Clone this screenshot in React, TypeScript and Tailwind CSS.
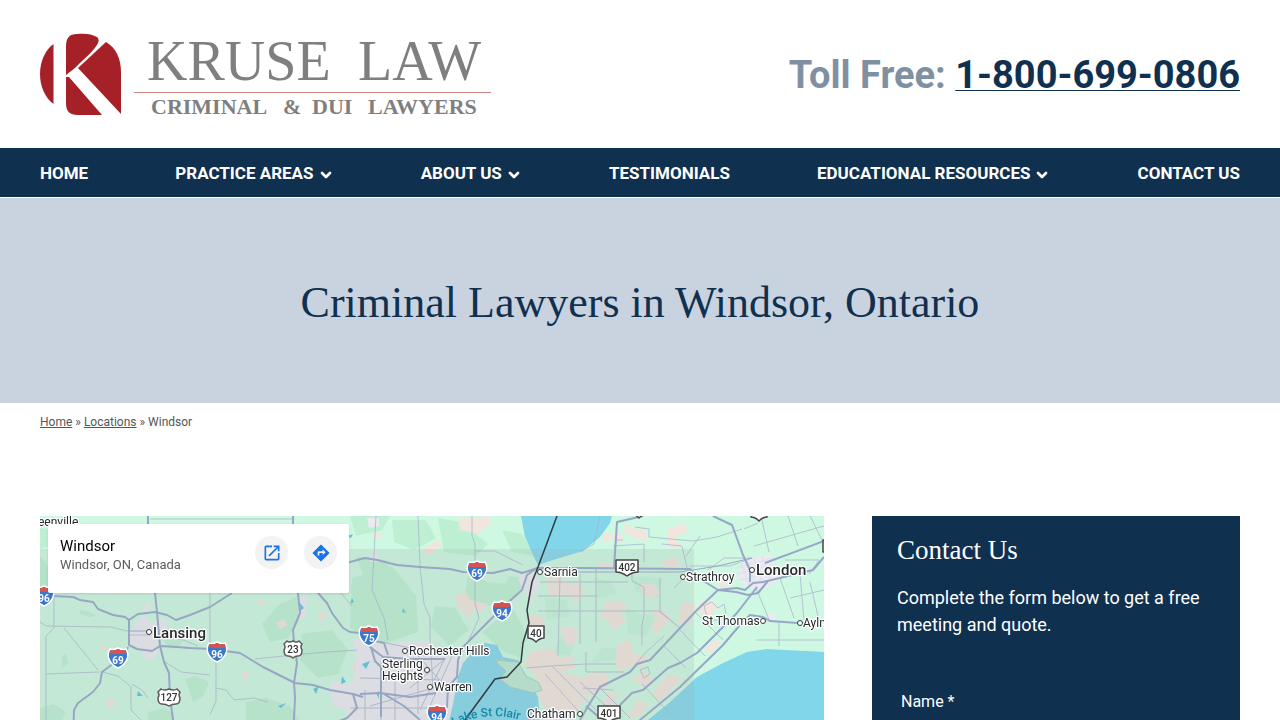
import { ChevronDown } from "lucide-react";

type NavItem = {
  label: string;
  hasMenu?: boolean;
};

const navItems: NavItem[] = [
  { label: "HOME" },
  { label: "PRACTICE AREAS", hasMenu: true },
  { label: "ABOUT US", hasMenu: true },
  { label: "TESTIMONIALS" },
  { label: "EDUCATIONAL RESOURCES", hasMenu: true },
  { label: "CONTACT US" },
];

const Logo = () => (
  <svg
    className="overflow-visible"
    width="452"
    height="84"
    viewBox="0 0 452 84"
    role="img"
    aria-label="Kruse Law"
  >
    <g fill="#a52127">
      <path d="M13.5 12C5 18 0 30 0 42s5 24 13.5 30Z" />
      <path d="M37 2c8-1 15 0 20 3 2 2 2 4 1 6-4 8-12 14-23 25l-9 7V15C26 6 29 2 37 2Z" />
      <path d="M66 10c10 6 15 16 15 31v41L38 36Z" />
      <path d="M29 45 62 83H38c-9 0-12-4-12-12V45Z" />
    </g>
    <path d="M94 60.500h357" stroke="#d08a86" />
    <g fill="#7f7f7f" className="font-['Liberation_Serif',serif]">
      <text x="107" y="48" fontSize="56">
        KRUSE
      </text>
      <text x="318" y="48" fontSize="56">
        LAW
      </text>
      <g fontSize="22" fontWeight="700">
        <text x="111" y="82">
          CRIMINAL
        </text>
        <text x="243" y="82">
          &amp;
        </text>
        <text x="272" y="82">
          DUI
        </text>
        <text x="328" y="82">
          LAWYERS
        </text>
      </g>
    </g>
  </svg>
);

const Header = () => (
  <header className="flex items-center justify-between px-10 py-8">
    <a href="#home">
      <Logo />
    </a>
    <p className="pt-0.5 text-[38px] leading-[48px] font-bold text-[#8090a3]">
      Toll Free:{" "}
      <a
        href="tel:1-800-699-0806"
        className="text-[#103050] underline decoration-1 underline-offset-2"
      >
        1-800-699-0806
      </a>
    </p>
  </header>
);

const Nav = () => (
  <nav className="flex h-[49px] items-center justify-between bg-[#103050] px-10 pt-0.5 text-[17px] font-bold text-white">
    {navItems.map((item) => (
      <a key={item.label} href="#" className="flex items-center gap-1">
        {item.label}
        {item.hasMenu && <ChevronDown className="mt-0.5 size-4" strokeWidth={4} />}
      </a>
    ))}
  </nav>
);

type ShieldProps = { x: number; y: number; n: string };

const Interstate = ({ x, y, n }: ShieldProps) => (
  <g transform={`translate(${x} ${y})`}>
    <path
      d="M-8-9q4 1.500 8-1 4 2.500 8 1 3 5 1 10-2 6-9 9-7-3-9-9-2-5 1-10Z"
      fill="#3b78c9"
      stroke="#fff"
      strokeWidth="1.500"
    />
    <path d="M-7.500-8q4 1 7.500-1 3.500 2 7.500 1l1 4H-8.500Z" fill="#d8534e" />
    <text y="6" textAnchor="middle" fontSize="10" fontWeight="700" fill="#fff">
      {n}
    </text>
  </g>
);

const UsRoute = ({ x, y, n }: ShieldProps) => {
  const w = n.length > 2 ? 10 : 8;
  const h = w / 2;
  return (
    <g transform={`translate(${x} ${y})`}>
      <path
        d={`M${2 - w} -8Q${-h} -6 0 -8Q${h} -6 ${w - 2} -8L${w + 1} -5Q${w - 1} -2 ${w + 1} 1Q${w + 1} 7 ${w - 3} 7Q${h - 2} 7 0 9Q${2 - h} 7 ${3 - w} 7Q${-w - 1} 7 ${-w - 1} 1Q${1 - w} -2 ${-w - 1} -5Z`}
        fill="#fff"
        stroke="#5b5b5b"
        strokeWidth="1.500"
      />
      <text y="4" textAnchor="middle" fontSize="10" fontWeight="500" fill="#333">
        {n}
      </text>
    </g>
  );
};

const OntarioRoute = ({ x, y, n }: ShieldProps) => {
  const w = n.length > 2 ? 11 : 8;
  const h = w / 2;
  return (
    <g transform={`translate(${x} ${y})`}>
      <path
        d={`M${-w} -7H${w}V5Q${h} 5 0 9Q${-h} 5 ${-w} 5Z`}
        fill="#fff"
        stroke="#444"
        strokeWidth="1.500"
        strokeLinejoin="round"
      />
      <text y="4" textAnchor="middle" fontSize="10" fontWeight="500" fill="#333">
        {n}
      </text>
    </g>
  );
};

type Town = {
  name: string;
  x: number;
  y: number;
  dot?: [number, number];
  size?: number;
  bold?: boolean;
};

const towns: Town[] = [
  { name: "eenville", x: -2, y: 10 },
  { name: "Lansing", x: 113, y: 122, dot: [109, 116], size: 15, bold: true },
  { name: "Rochester Hills", x: 369, y: 139, dot: [365, 135] },
  { name: "Sterling", x: 342, y: 152, dot: [387, 154] },
  { name: "Heights", x: 342, y: 164 },
  { name: "Warren", x: 394, y: 175, dot: [390, 171] },
  { name: "Sarnia", x: 504, y: 60, dot: [500, 56] },
  { name: "Chatham", x: 487, y: 202, dot: [540, 198] },
  { name: "Strathroy", x: 646, y: 65, dot: [643, 61] },
  { name: "London", x: 716, y: 59, dot: [712, 54], size: 15, bold: true },
  { name: "St Thomas", x: 662, y: 109, dot: [723, 105] },
  { name: "Aylmer", x: 763, y: 111, dot: [760, 107] },
];

const MapDrawing = () => (
  <svg
    className="absolute inset-0 h-full w-full font-['Roboto',sans-serif]"
    viewBox="0 0 784 450"
    preserveAspectRatio="xMinYMin slice"
    role="img"
    aria-label="Map of Windsor, Ontario"
  >
    <rect width="784" height="450" fill="#cff8e2" />

    {/* woodland */}
    <g fill="#b5eccd" opacity=".7">
      <path d="M0 12 18 16 10 30 0 33ZM310 0h40l-8 14-26 6ZM352 4l34 0 10 18-22 12-20-8ZM398 2l22 4 28 22-12 12-32-4ZM462 14l20 4 12 22-22-4Z" />
      <path d="M0 40l12 14-6 24-6 2ZM40 94l10 2 6 4-8 1-8-3ZM124 117l12-5 10 8-6 10-10 3-6-8ZM22 140l4-2 2 10-6 4ZM145 163l10-3 14 6-6 14-10 6-4-12ZM240 88l18-8 4 20-14 22-18 4-8-18ZM262 118l30-4 16 20-10 24-20 4-18-18ZM206 186l20-4 24 8 10 14h-54ZM108 196l16-4 10 6 0 6h-26ZM0 192l14-4 12 8-4 8H0Z" />
      <path d="M312 62l40-12 24 30 2 36-34 12-34-16ZM316 40l30 4 10 20-30 4ZM395 90l20 2 14 22-20 16-18-20ZM428 58l20 8 20 2-18 22-26-4ZM442 116l30-24 12 20-2 30-18-6ZM470 60l14 2-4 14-20 16-6-8Z" />
      <path d="M505 82l22 2 2 16-22 4ZM555 62l16 4 6 12-18 4ZM586 92l18 8 14-2-12 22-18-2ZM562 132l22 0-8 12-24 2ZM520 120l14 8-4 12-16-2ZM592 60l30 2-4 20-22-6Z" opacity=".6" />
    </g>
    {/* farmland and small settlements */}
    <g fill="#f2e5dd">
      <path d="M384 32l14-8 3 5-10 10-6-1ZM418 3l30-3 4 6-14 12-18-4ZM414 80l12-4 4 8 18 4-6 8-10-2-2 8-12-10ZM332 18l8-2 2 5-8 2ZM236 107l8-4 3 6-7 4ZM312 148l6-3 3 8-7 2ZM75 186l-6-4-4 6 6 5ZM278 98l6-3 3 7-7 4ZM219 82l6 2-2 5-5-1ZM204 155l6 2-4 6-5-3ZM62 128l4 2-2 5-3-2Z" />
      <path d="M498 28l14 8-2 8-14-2ZM506 63l12-2 10 6 14 0 2 12-8 6-10-6-16 2ZM490 100l12 0 4 16-12 8-6-8ZM566 86l14-2 8 8-8 4 6 10-14 8-4-10-8-2ZM600 68l14 0 6 10-10 4-8-4ZM562 16l12 4 6-5 4 12-12-4-8 4ZM583 8l14 6 8 0 2 12-12-4-10-6ZM628 13l16-6 4 8-14 6 8 10-14 0ZM560 46l20 3-4 4-18-2ZM620 46l14-6 6 10-12 2Z" />
      <path d="M490 136l22-4 8 10 12-2 4 12-14 4 22 6 10-6 14 2-2 16-18 6-14 20-20 4-14-18-4-26-12-12ZM577 129l12-6 4 14 16 4-8 10-10-2-12 8-4-12ZM613 94l10 0 8 8-14 16-6-6 4-10ZM642 85l14 4-6 20-12-2ZM520 112l12-2 6 6-2 12-10 2Z" />
      <path d="M604 154l10 10-8 8-14-8ZM628 158l14 4-22 24-8-8ZM660 86l10-2 8 8-8 8-10-2ZM674 124l8 2-12 12-6-4ZM598 184l10 4-8 12-14 2ZM568 176l10 2-4 12-12 2ZM680 62l8 2-4 8-8-4Z" />
    </g>

    {/* built-up areas */}
    <g fill="#eceaf1">
      <path d="M313 124l14-3 14 6 50-2 12 14 36 4-16 22-9 24-8 18H302l6-12-16-6-2-22 12-2 8 4 6-14 0-14Z" />
      <path d="M98 104l7-4 6 8 10-6 6 4 0 10-10 4 2 14-6 10-8-2-6-12-8 2-2-12ZM704 44l24-6 14 24-16 10-14 2-16-12ZM478 62l14-10 8 16-9 18-9-14ZM258 82l9-2-2 22-7 2ZM102 90l6-3 3 6-8 3Z" />
      <path d="M327 2l12 0 0 8-10 2ZM330 38l8 0 0 8-8 0ZM384 186l12-4 8 16-20 6ZM728 97l8 0 0 8-8 0Z" />
    </g>

    {/* lakes */}
    <g fill="#82d6ea">
      <path d="M481 0l4 21 8 18 5 10 15-5 30-9 17-14 10-14 2-7Z" />
      <path d="M445 127l12 2 6 12 14 3 4 2-14 15 3 10 23 1 5 9 2 23-10 46h-90l6-30 7-32 5-27 5-14 8-9Z" />
      <path d="M600 209l8-5 22-18 27-25 26-14 24-11 20-3 57 3v314H540l12-190Z" />
    </g>
    <g fill="#58c5e0">
      <path d="M260 87l4 5-4 3ZM302 160l4 6-5 2ZM8 22l6 3-6 2ZM322 148l8-3-4 8ZM336 177l3-2 0 8ZM98 175l5 5-6 0ZM238 190l8-3-5 5ZM273 173l6-3-3 8ZM363 92l3 5-4-1ZM307 20l6-2-2 4ZM312 82l2 4-4 2Z" />
    </g>
    <path
      d="M456 144l22 2 8 14 12 6 4 8-8 3-24-6-10-8 6-8-8-7Z"
      fill="#bce8d2"
      stroke="#a9cbbc"
    />

    {/* minor roads */}
    <g fill="none" stroke="#a9b2ce" strokeWidth="1" opacity=".75">
      <path d="M0 106l6 4 65 1 16 4 21 0M6 158v46M12 31v6M6 158l54-2M14 80l0 32-8 8 0 38M24 112l34 42M62 156l16 4 12 10M90 119h20M90 115h18M110 3h144M170 77l0 54M176 139l0 46-6 14M91 170l0 24 10 10M92 168l10 6 6 8M125 146l16 10 29 3M176 172l10 2 8 10 20-2 14 4M215 143l38-4 34-3 30-2M128 118l30 12" />
      <path d="M336 0l-2 38-2 36 12 28 4 22M378 0l2 50 4 38 6 14 0 20 3 50M432 0l0 20 3 8 0 60 4 14-10 22M300 76l12 14M435 35h20l28 14" />
      <path d="M498 95h122l16 14M500 66h88M540 58l0 70M520 60l-2 80M556 52l0 74M592 53l0 12 12 6v28l-2 10v20M498 80h60M510 150l36-2 30 0M486 152l24-2M543 172l30 2M546 136v20h38" />
      <path d="M573 30l31-2 0 18M595 11l14 2 0 8 44 4 24-4 25-8M577 24l6 0M622 28l20 2 6 26M650 50l40 0 22-8M560 0l-6 28-14 8M704 13l14-6M721 0l8 36M748 0l10 30M770 0l14 28M714 30l70-20M716 72l14 34M740 62l14 40M760 58l4 46M750 82l34-8M716 124h68M739 106l0 24M770 66l8 34" />
      <path d="M590 156l14-18 20-18M624 130l22 22M640 114l25 26M655 96l28 28M620 62v34l20 16M634 72l16-16M668 54l16-12 28 0M745 44l34 0-10 14M660 20l-14 20M602 168l28 30" />
      <path d="M505 158l36 40M512 150l44 44M540 166l26 24M560 172l30 30" />
      <path d="M664 90l8-4 6 6 6-4 2 10-8 6-10 0ZM600 154l8-3 2 7-6 4Z" />
    </g>
    <g fill="none" stroke="#b3b9cf" strokeWidth="1">
      <path d="M341 126l30 6 34 38M320 162l80 2M325 174v30M341 146v58M310 192h90M355 166v38M370 172l36-30M378 148v50M330 190l70-20M404 144l-24 50M412 140l-22 50" />
    </g>
    <g fill="none" stroke="#dfe2ef" strokeWidth="1.500">
      <path d="M696 52l38-10M697 58l40-10M699 64l40-8M700 44l10 28M706 42l10 28M713 40l10 28M722 40l8 24" />
    </g>

    {/* highways */}
    <g fill="none" stroke="#97a5c8" strokeWidth="2" strokeLinejoin="round">
      <path d="M108 0v8M115 77l2 19 3 34 4 16 5 11 1 24 3 23v30" />
      <path d="M-2 80h15l20 1 7 3 13 2 5 7 15 6 12 2 4 3v25l8 4 15 2 8-5 17 1 13 1 20 1 30 4 23 14 20 10 12 6 18 2 17 5 23 4 10 3" />
      <path d="M89 104l9-6 17-2 12 3 9 5 14-5 20-8 22-14M88 131l-3 6-7 7-16 12-2 11-7 9-15 11-4 7-1 30" />
      <path d="M253 0v8M258 77l2 20-7 17 1 13 3 20-3 20 1 14-2 43M278 77l9 10 5 10 11 15 7 4 10 1 10 14 13 10 26 2 36 0" />
      <path d="M286 60l14-10 10-4 15-4 12 2 20 5 23 2 30 2 13 3 30 1 17-4 12 4 16-5" />
      <path d="M498 51l-11 8-5 15-9 8-20 19-30 30-5 13-1 17-9 10-1 20-17 13-10 30" />
      <path d="M313 178l4 14-10 10-10 4M320 117l6 6 18 4 4 12M331 131l4 14 6 6 0 50M320 178l20-1 30 4 26-4M344 178l20 12 16 14" />
      <path d="M498 52h42l110 1 7 8 21 13 19-2 8 2 8-7 10-1 50-12 11-13" />
      <path d="M498 56h142l38-6 34-8" strokeWidth="1" />
      <path d="M540 204l7-12 13-21 30-15 7-8 13-4 47-50 21-20 18 2 12 3 10-2 10-12M546 190l14 12" />
      <path d="M580 189l12-12 11-3 25-22 12-5 17-10 40-40 10-13 10-13" />
      <path d="M590 212l10-8 40-33 43-42 17-20 10-10 13 2 7 4 28 2h26" />
      <path d="M673 0l19 9 11 30 7 15 0 12M603 0l-26 6-3 46M725 47l59-22" />
    </g>

    <rect y="33" width="654" height="417" fill="#9aa" opacity=".2" />
    <path
      d="M517 0l-19 51-6 15-5 28 2 13-6 20-2 19-14 15-12 2-30 41-30 46"
      fill="none"
      stroke="#333a40"
      strokeWidth="1.500"
    />

    <path id="lake-label" d="M414 210Q452 190 496 210" fill="none" />
    <text fontSize="12" fontWeight="500" fill="#168aa5">
      <textPath href="#lake-label">Lake St Clair</textPath>
    </text>

    {towns.map((t) => (
      <g key={t.name}>
        {t.dot && (
          <circle cx={t.dot[0]} cy={t.dot[1]} r="2.500" fill="#fff" stroke="#333" />
        )}
        <text
          x={t.x}
          y={t.y}
          fontSize={t.size ?? 12}
          fontWeight={t.bold ? 500 : 400}
          fill="#26282b"
          stroke="#fff"
          strokeWidth="2.500"
          strokeLinejoin="round"
          paintOrder="stroke"
        >
          {t.name}
        </text>
      </g>
    ))}

    <Interstate x={4} y={80} n="96" />
    <Interstate x={78} y={142} n="69" />
    <Interstate x={177} y={136} n="96" />
    <Interstate x={329} y={120} n="75" />
    <Interstate x={437} y={55} n="69" />
    <Interstate x={462} y={95} n="94" />
    <Interstate x={397} y={199} n="94" />
    <UsRoute x={253} y={133} n="23" />
    <UsRoute x={129} y={181} n="127" />
    <OntarioRoute x={496} y={117} n="40" />
    <OntarioRoute x={587} y={51} n="402" />
    <OntarioRoute x={569} y={197} n="401" />
    <OntarioRoute x={599} y={-7} n="21" />
    <OntarioRoute x={719} y={-4} n="7" />
    <OntarioRoute x={791} y={31} n="19" />
  </svg>
);

const OpenIcon = () => (
  <svg className="size-5" viewBox="0 0 24 24" fill="#1a73e8" aria-hidden="true">
    <path d="M19 19H5V5h7V3H5a2 2 0 0 0-2 2v14a2 2 0 0 0 2 2h14a2 2 0 0 0 2-2v-7h-2ZM14 3v2h3.590l-9.830 9.830 1.410 1.410L19 6.410V10h2V3Z" />
  </svg>
);

const DirectionsIcon = () => (
  <svg className="size-5" viewBox="0 0 24 24" fill="#1a73e8" aria-hidden="true">
    <path d="m21.710 11.290-9-9a1 1 0 0 0-1.410 0l-9 9a1 1 0 0 0 0 1.410l9 9a1 1 0 0 0 1.410 0l9-9a1 1 0 0 0 0-1.410ZM14 14.500V12h-4v3H8v-4a1 1 0 0 1 1-1h5V7.500l3.500 3.500Z" />
  </svg>
);

const LocationMap = () => (
  <section className="relative h-[450px] overflow-hidden">
    <MapDrawing />
    <div className="absolute top-2 left-2 flex h-[69px] w-[301px] gap-4 rounded-xs bg-white p-3 shadow">
      <div className="flex-1">
        <h2 className="text-[15px] leading-5 text-black">Windsor</h2>
        <p className="text-[13px] leading-[18px] text-[#5b5b5b]">Windsor, ON, Canada</p>
      </div>
      <button
        type="button"
        aria-label="Open in maps"
        className="flex size-[33px] items-center justify-center rounded-full bg-[#f3f3f3]"
      >
        <OpenIcon />
      </button>
      <button
        type="button"
        aria-label="Directions"
        className="flex size-[33px] items-center justify-center rounded-full bg-[#f3f3f3]"
      >
        <DirectionsIcon />
      </button>
    </div>
  </section>
);

const ContactForm = () => (
  <aside className="bg-[#103050] px-[25px] pt-4 pb-8 text-white">
    <h2 className="font-['Liberation_Serif',serif] text-[27px] leading-9">Contact Us</h2>
    <p className="mt-4 text-lg leading-[27px]">
      Complete the form below to get a free meeting and quote.
    </p>
    <form className="mt-[52px] flex flex-col gap-2 px-1">
      <label htmlFor="name" className="text-base leading-6">
        Name *
      </label>
      <input
        id="name"
        type="text"
        required
        className="h-10 w-full bg-white px-3 text-[#103050]"
      />
    </form>
  </aside>
);

const App = () => {
  return (
    <div className="bg-white font-['Roboto',sans-serif]">
      <Header />
      <Nav />
      <div className="mt-px flex h-[205px] items-center justify-center bg-[#c9d3df] px-10 pt-1">
        <h1 className="font-['Liberation_Serif',serif] text-[44px] leading-[54px] text-[#103050]">
          Criminal Lawyers in Windsor, Ontario
        </h1>
      </div>
      <div className="px-10 pt-[9px] text-xs leading-5 text-[#555]">
        <a href="#home" className="underline">
          Home
        </a>{" "}
        »{" "}
        <a href="#locations" className="underline">
          Locations
        </a>{" "}
        » Windsor
      </div>
      <main className="grid grid-cols-[1fr_368px] gap-12 px-10 pt-[84px]">
        <LocationMap />
        <ContactForm />
      </main>
    </div>
  );
};

export default App;
